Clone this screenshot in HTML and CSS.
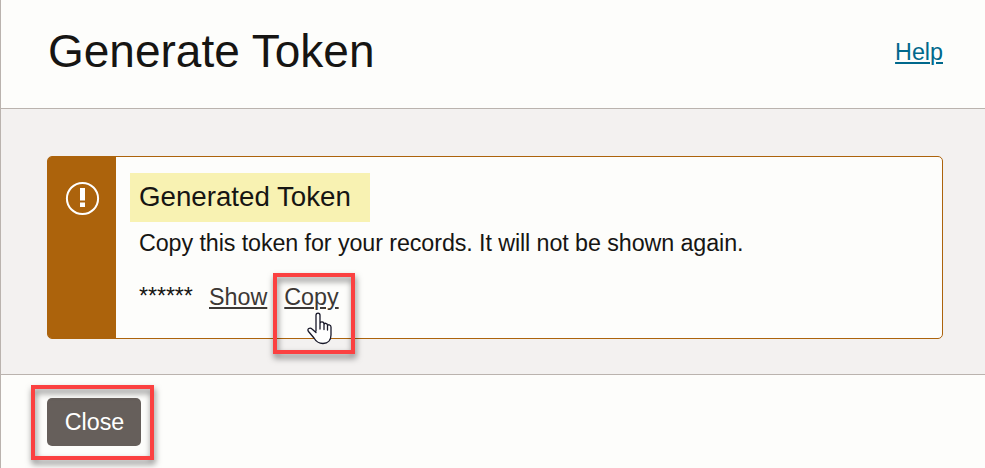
FILE: index.html
```html
<!DOCTYPE html>
<html lang="en">
<head>
<meta charset="utf-8">
<title>Generate Token</title>
<link rel="stylesheet" href="styles.css">
</head>
<body>
<div class="dialog">
  <header class="header">
    <h1 class="title">Generate Token</h1>
    <a class="help" href="#">Help</a>
  </header>
  <main class="content">
    <section class="alert">
      <div class="alert-side">
        <svg class="alert-icon" width="35" height="35" viewBox="0 0 35 35">
          <circle cx="17.5" cy="17.500" r="15.600" fill="none" stroke="#fff" stroke-width="2"/>
          <path d="M15 7h5v12.500H15zM15 21.500h5v4.500H15z" fill="#fff"/>
        </svg>
      </div>
      <div class="alert-body">
        <h2 class="alert-title">Generated Token</h2>
        <p class="message">Copy this token for your records. It will not be shown again.</p>
        <div class="token-row">
          <span class="mask">******</span>
          <a class="action" href="#">Show</a>
          <a class="action copy" href="#">Copy<span class="marker copy-marker"></span>
            <svg class="pointer" width="26" height="33" viewBox="0 0 26 33">
              <path d="M9 19V3.200C9 .3 13 .3 13 3.200V12C13 9 17 9.300 17 12V13C17 10.500 20.500 10.800 20.500 13.300V14.300C20.500 12 24 12.300 24 15V23C24 28 21 31.500 16 31.500C11.500 31.500 9 29.500 7 26L1.500 19.500C-.5 17 3 15 5 17L9 20.500M13 12V17M17 13V17.500M20.500 14V18" fill="#fff" stroke="#171728" stroke-width="1.300" stroke-linejoin="round" stroke-linecap="round"/>
            </svg>
          </a>
        </div>
      </div>
    </section>
  </main>
  <footer class="footer">
    <button class="close" type="button">Close<span class="marker close-marker"></span></button>
  </footer>
</div>
</body>
</html>
```

FILE: styles.css
```css
* { box-sizing: border-box; }
body {
  margin: 0;
  font-family: "Liberation Sans", Arial, sans-serif;
  color: #161513;
  background: #fdfdfb;
}
.dialog {
  height: 468px;
  display: flex;
  flex-direction: column;
  border-left: 1px solid #bab3ae;
  overflow: hidden;
}
.header {
  height: 109px;
  display: flex;
  align-items: center;
  justify-content: space-between;
  padding: 0 42px 6px 47px;
  border-bottom: 1px solid #bab3ae;
}
.title { margin: 0; font-size: 46px; line-height: 54px; font-weight: 400; }
.help {
  padding-top: 2px;
  font-size: 23.3px;
  line-height: 28px;
  color: #00688c;
  text-decoration-thickness: 2px;
  text-underline-offset: 2px;
}
.content {
  height: 266px;
  padding: 47px 42px 0 46px;
  background: #f3f1f0;
  border-bottom: 1px solid #bab3ae;
}
.alert {
  height: 183px;
  display: flex;
  background: #fdfdfb;
  border: 1px solid #ac630c;
  border-radius: 5px;
}
.alert-side {
  width: 68px;
  padding: 24px 0 0 17px;
  background: #ac630c;
  border-radius: 3px 0 0 3px;
}
.alert-icon { display: block; }
.alert-body { flex: 1; padding: 16px 0 0 14px; }
.alert-title {
  width: 240px;
  height: 49px;
  margin: 0;
  padding-left: 9px;
  background: #f8f2b2;
  font-size: 27.7px;
  font-weight: 400;
  line-height: 48px;
}
.message {
  margin: 7px 0 0 9px;
  font-size: 23.3px;
  line-height: 28px;
  letter-spacing: -0.09px;
}
.token-row {
  display: flex;
  margin: 26px 0 0 9px;
  font-size: 23.3px;
  line-height: 28px;
}
.mask { width: 70px; letter-spacing: -0.1px; line-height: 26px; }
.action {
  color: #3c3835;
  margin-right: 17px;
  text-decoration-thickness: 2px;
  text-underline-offset: 2px;
}
.copy { position: relative; }
.marker {
  position: absolute;
  border: 4px solid #fb4141;
  filter: drop-shadow(1px 4px 3px rgba(0, 0, 0, .5));
  pointer-events: none;
}
.copy-marker { left: -11px; top: -10px; width: 82px; height: 81px; }
.pointer { position: absolute; left: 23px; top: 29px; }
.footer { flex: 1; padding: 23px 0 0 46px; }
.close {
  position: relative;
  display: block;
  width: 94px;
  height: 48px;
  padding: 0 0 0 1px;
  border: 0;
  border-radius: 5px;
  background: #665f5b;
  color: #fff;
  font: 23.3px/48px "Liberation Sans", Arial, sans-serif;
}
.close-marker { left: -16px; top: -13px; width: 123px; height: 75px; }
```
